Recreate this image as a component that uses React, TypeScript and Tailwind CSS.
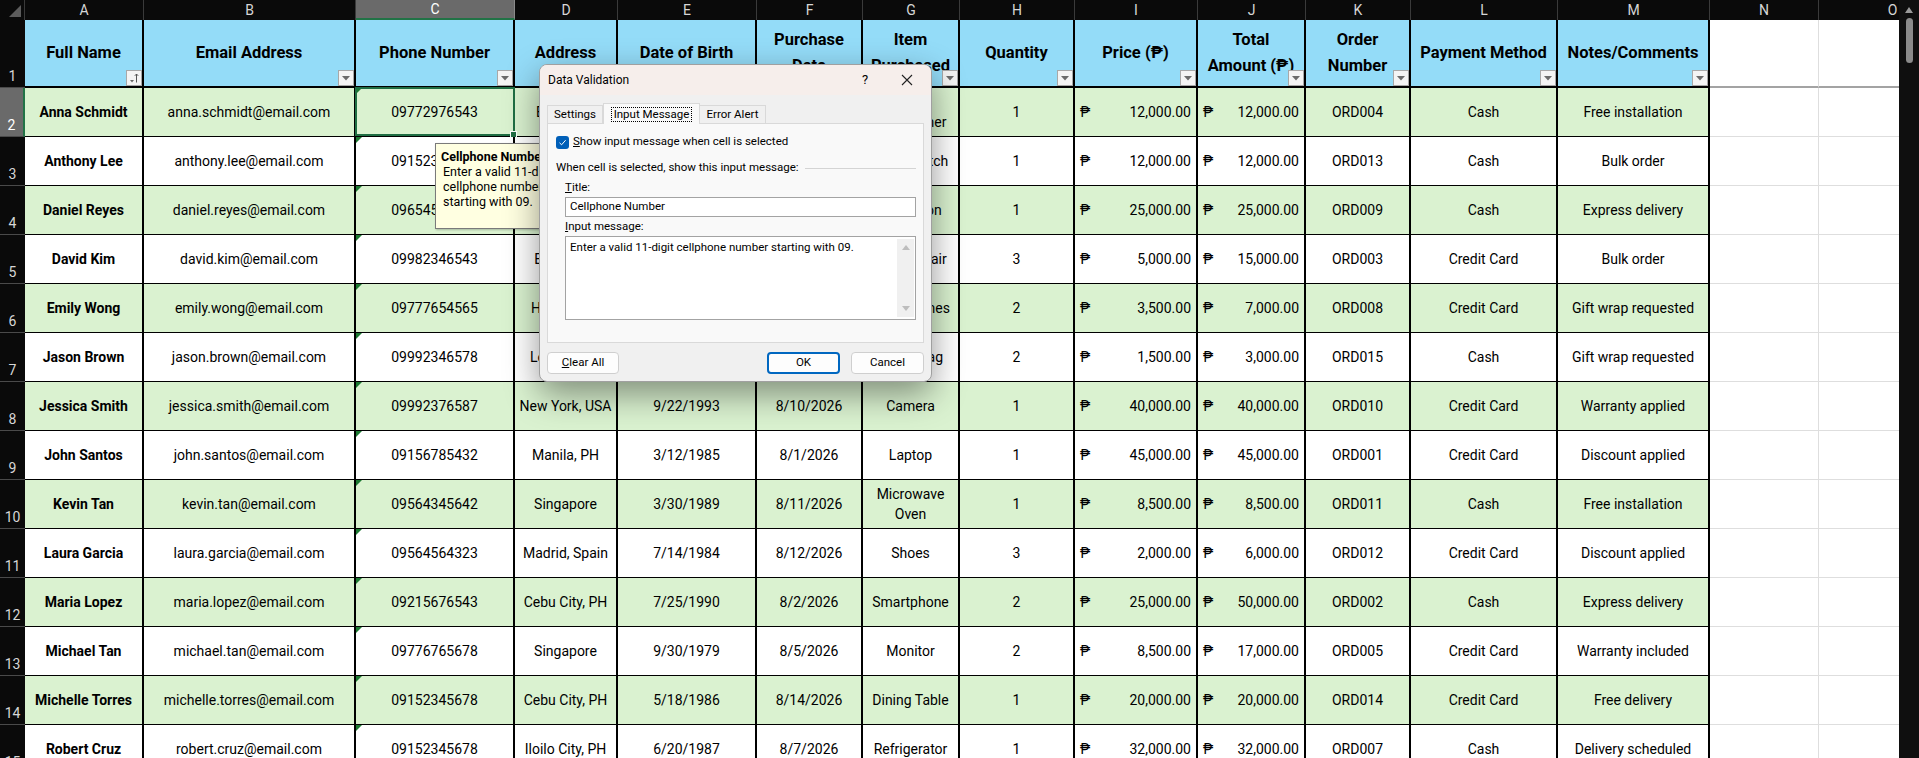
import React from "react";

type Row = {
  name: string;
  email: string;
  phone: string;
  address: string;
  dob: string;
  bought: string;
  item: string;
  qty: string;
  price: string;
  total: string;
  order: string;
  payment: string;
  notes: string;
};

const rows: Row[] = [
  { name: "Anna Schmidt", email: "anna.schmidt@email.com", phone: "09772976543", address: "Berlin, DE", dob: "2/14/1991", bought: "8/4/2026", item: "Air Conditioner", qty: "1", price: "12,000.00", total: "12,000.00", order: "ORD004", payment: "Cash", notes: "Free installation" },
  { name: "Anthony Lee", email: "anthony.lee@email.com", phone: "09152367890", address: "Seoul, KR", dob: "11/3/1988", bought: "8/13/2026", item: "Smartwatch", qty: "1", price: "12,000.00", total: "12,000.00", order: "ORD013", payment: "Cash", notes: "Bulk order" },
  { name: "Daniel Reyes", email: "daniel.reyes@email.com", phone: "09654567890", address: "Davao, PH", dob: "4/8/1992", bought: "8/9/2026", item: "Television", qty: "1", price: "25,000.00", total: "25,000.00", order: "ORD009", payment: "Cash", notes: "Express delivery" },
  { name: "David Kim", email: "david.kim@email.com", phone: "09982346543", address: "Busan, KR", dob: "1/21/1987", bought: "8/3/2026", item: "Office Chair", qty: "3", price: "5,000.00", total: "15,000.00", order: "ORD003", payment: "Credit Card", notes: "Bulk order" },
  { name: "Emily Wong", email: "emily.wong@email.com", phone: "09777654565", address: "Hong Kong", dob: "6/2/1995", bought: "8/8/2026", item: "Headphones", qty: "2", price: "3,500.00", total: "7,000.00", order: "ORD008", payment: "Credit Card", notes: "Gift wrap requested" },
  { name: "Jason Brown", email: "jason.brown@email.com", phone: "09992346578", address: "London, UK", dob: "10/9/1990", bought: "8/15/2026", item: "Travel Bag", qty: "2", price: "1,500.00", total: "3,000.00", order: "ORD015", payment: "Cash", notes: "Gift wrap requested" },
  { name: "Jessica Smith", email: "jessica.smith@email.com", phone: "09992376587", address: "New York, USA", dob: "9/22/1993", bought: "8/10/2026", item: "Camera", qty: "1", price: "40,000.00", total: "40,000.00", order: "ORD010", payment: "Credit Card", notes: "Warranty applied" },
  { name: "John Santos", email: "john.santos@email.com", phone: "09156785432", address: "Manila, PH", dob: "3/12/1985", bought: "8/1/2026", item: "Laptop", qty: "1", price: "45,000.00", total: "45,000.00", order: "ORD001", payment: "Credit Card", notes: "Discount applied" },
  { name: "Kevin Tan", email: "kevin.tan@email.com", phone: "09564345642", address: "Singapore", dob: "3/30/1989", bought: "8/11/2026", item: "Microwave Oven", qty: "1", price: "8,500.00", total: "8,500.00", order: "ORD011", payment: "Cash", notes: "Free installation" },
  { name: "Laura Garcia", email: "laura.garcia@email.com", phone: "09564564323", address: "Madrid, Spain", dob: "7/14/1984", bought: "8/12/2026", item: "Shoes", qty: "3", price: "2,000.00", total: "6,000.00", order: "ORD012", payment: "Credit Card", notes: "Discount applied" },
  { name: "Maria Lopez", email: "maria.lopez@email.com", phone: "09215676543", address: "Cebu City, PH", dob: "7/25/1990", bought: "8/2/2026", item: "Smartphone", qty: "2", price: "25,000.00", total: "50,000.00", order: "ORD002", payment: "Cash", notes: "Express delivery" },
  { name: "Michael Tan", email: "michael.tan@email.com", phone: "09776765678", address: "Singapore", dob: "9/30/1979", bought: "8/5/2026", item: "Monitor", qty: "2", price: "8,500.00", total: "17,000.00", order: "ORD005", payment: "Credit Card", notes: "Warranty included" },
  { name: "Michelle Torres", email: "michelle.torres@email.com", phone: "09152345678", address: "Cebu City, PH", dob: "5/18/1986", bought: "8/14/2026", item: "Dining Table", qty: "1", price: "20,000.00", total: "20,000.00", order: "ORD014", payment: "Credit Card", notes: "Free delivery" },
  { name: "Robert Cruz", email: "robert.cruz@email.com", phone: "09152345678", address: "Iloilo City, PH", dob: "6/20/1987", bought: "8/7/2026", item: "Refrigerator", qty: "1", price: "32,000.00", total: "32,000.00", order: "ORD007", payment: "Cash", notes: "Delivery scheduled" },
];

const letters = ["A", "B", "C", "D", "E", "F", "G", "H", "I", "J", "K", "L", "M", "N", "O"];

const headers = [
  "Full Name",
  "Email Address",
  "Phone Number",
  "Address",
  "Date of Birth",
  "Purchase\nDate",
  "Item\nPurchased",
  "Quantity",
  "Price (₱)",
  "Total\nAmount (₱)",
  "Order\nNumber",
  "Payment Method",
  "Notes/Comments",
];

function FilterButton({ sorted }: { sorted?: boolean }) {
  return (
    <div className="absolute right-0 bottom-0 w-[16px] h-[16px] bg-[#f4f4f4] border border-[#a8a8a8] flex items-center justify-center">
      {sorted ? (
        <svg width="12" height="12" viewBox="0 0 12 12">
          <path d="M2 8h4l-2 2.5z" fill="#666" />
          <path d="M8.5 10.5V2M6.8 3.8L8.5 2l1.7 1.8" stroke="#555" strokeWidth="1" fill="none" />
        </svg>
      ) : (
        <svg width="8" height="5" viewBox="0 0 8 5">
          <path d="M0 0h8L4 4.5z" fill="#6b6b6b" />
        </svg>
      )}
    </div>
  );
}

function RowNum({ n }: { n: number }) {
  if (n === 2) {
    return (
      <div className="bg-[#6a6a6a] text-white border-b border-[#4a4a4a] border-r-2 border-r-[#217346] flex items-end justify-center pb-[2px] text-[14px] leading-[18px]">
        {n}
      </div>
    );
  }
  return (
    <div className="bg-[#0a0a0a] text-[#d6d6d6] border-b border-[#4a4a4a] flex items-end justify-center pb-[2px] text-[14px] leading-[18px]">
      {n}
    </div>
  );
}

function DataRow({ r, n }: { r: Row; n: number }) {
  const bg = n % 2 === 0 ? "bg-[#daf2d0]" : "bg-white";
  const cell = `${bg} border-r-2 border-b border-black flex items-center justify-center text-center px-[4px] leading-[20px]`;
  const money = `${bg} border-r-2 border-b border-black flex items-center justify-between pl-[5px] pr-[5px]`;
  return (
    <>
      <RowNum n={n} />
      <div className={`${cell} font-bold`}>{r.name}</div>
      <div className={cell}>{r.email}</div>
      <div className={`${cell} relative`}>
        <div className="absolute left-0 top-0 w-0 h-0 border-t-[6px] border-r-[6px] border-t-[#1c7a32] border-r-transparent" />
        {r.phone}
        {n === 2 && (
          <div className="absolute -left-[1px] -top-[1px] -right-[2px] bottom-0 border-2 border-[#1f6e43]">
            <div className="absolute -right-[4px] -bottom-[4px] w-[7px] h-[7px] bg-[#1f6e43] border border-white" />
          </div>
        )}
      </div>
      <div className={cell}>{r.address}</div>
      <div className={cell}>{r.dob}</div>
      <div className={cell}>{r.bought}</div>
      <div className={cell}>{r.item}</div>
      <div className={cell}>{r.qty}</div>
      <div className={money}>
        <span>₱</span>
        <span>{r.price}</span>
      </div>
      <div className={money}>
        <span>₱</span>
        <span>{r.total}</span>
      </div>
      <div className={cell}>{r.order}</div>
      <div className={cell}>{r.payment}</div>
      <div className={cell}>{r.notes}</div>
      <div className="bg-white border-r border-b border-[#dedede]" />
      <div className="bg-white border-b border-[#dedede]" />
    </>
  );
}

function Sheet() {
  return (
    <div className="grid w-max grid-cols-[25px_119px_212px_159px_103px_139px_106px_97px_115px_123px_108px_105px_147px_152px_109px_148px] grid-rows-[20px_68px_repeat(14,49px)] text-[14px] text-black">
      {/* column letters */}
      <div className="bg-[#0a0a0a] border-r border-[#3a3a3a] flex items-end justify-end pr-[3px] pb-[3px]">
        <svg width="12" height="12" viewBox="0 0 12 12">
          <path d="M12 0V12H0z" fill="#5c5c5c" />
        </svg>
      </div>
      {letters.map((l) =>
        l === "C" ? (
          <div key={l} className="bg-[#6a6a6a] text-white border-r border-[#8a8a8a] border-b-2 border-b-[#217346] flex items-center justify-center">
            {l}
          </div>
        ) : (
          <div key={l} className="bg-[#0a0a0a] text-[#d6d6d6] border-r border-[#3a3a3a] flex items-center justify-center">
            {l}
          </div>
        )
      )}

      {/* header row */}
      <div className="bg-[#0a0a0a] text-[#d6d6d6] border-b border-[#4a4a4a] flex items-end justify-center pb-[2px] leading-[18px]">
        1
      </div>
      {headers.map((h, i) => (
        <div
          key={h}
          className="relative bg-[#94dcf8] border-r-2 border-b-2 border-black flex items-center justify-center text-center px-[3px] font-bold text-[16.5px] leading-[26px] whitespace-pre-line"
        >
          {h}
          <FilterButton sorted={i === 0} />
        </div>
      ))}
      <div className="bg-white border-r border-[#dedede] border-b-2 border-b-[#a3a3a3]" />
      <div className="bg-white border-b-2 border-b-[#a3a3a3]" />

      {rows.map((r, i) => (
        <DataRow key={r.name} r={r} n={i + 2} />
      ))}
    </div>
  );
}

function InputTooltip() {
  return (
    <div className="absolute left-[435px] top-[143px] w-[150px] h-[86px] bg-[#ffffe1] border border-[#7a7a7a] shadow-[1px_1px_2px_rgba(0,0,0,0.25)] pt-[5px] text-[12.5px] leading-[15px] text-black whitespace-nowrap">
      <div className="pl-[5px] font-bold">Cellphone Number</div>
      <div className="pl-[7px]">Enter a valid 11-digit</div>
      <div className="pl-[7px]">cellphone number</div>
      <div className="pl-[7px]">starting with 09.</div>
    </div>
  );
}

function DialogButton({ children, primary }: { children: React.ReactNode; primary?: boolean }) {
  return (
    <div
      className={
        primary
          ? "w-[73px] h-[22px] rounded-[4px] bg-[#fdfdfd] border-2 border-[#0067c0] flex items-center justify-center"
          : "w-[73px] h-[22px] rounded-[4px] bg-[#fdfdfd] border border-[#cfcfcf] flex items-center justify-center"
      }
    >
      {children}
    </div>
  );
}

function DataValidationDialog() {
  return (
    <div className="absolute left-[539px] top-[64px] w-[393px] h-[318px] rounded-[8px] bg-[#f0f0f0] border border-[#a0a0a0] shadow-[0_12px_34px_rgba(0,0,0,0.42)] overflow-hidden text-[11.5px] text-black flex flex-col">
      <div className="h-[30px] shrink-0 bg-[#f6eeeb] flex items-center pl-[8px] text-[12px]">
        <span className="flex-1">Data Validation</span>
        <span className="w-[20px] text-center text-[13px] mr-[26px]">?</span>
        <svg width="12" height="12" viewBox="0 0 12 12" className="mr-[18px]">
          <path d="M1 1L11 11M11 1L1 11" stroke="#222" strokeWidth="1.1" />
        </svg>
      </div>

      <div className="px-[7px] pt-[8px]">
        <div className="h-[20px] flex items-end">
          <div className="w-[56px] h-[18px] border border-b-0 border-[#d9d9d9] bg-[#f0f0f0] flex items-center justify-center">
            Settings
          </div>
          <div className="relative z-10 w-[97px] h-[21px] -mb-px border border-b-0 border-[#d9d9d9] bg-[#f9f9f9] flex items-center justify-center">
            <span className="border border-dotted border-black px-[2px] leading-[13px]">Input Message</span>
          </div>
          <div className="w-[66px] h-[18px] border border-b-0 border-l-0 border-[#d9d9d9] bg-[#f0f0f0] flex items-center justify-center">
            Error Alert
          </div>
        </div>

        <div className="h-[220px] border border-[#d9d9d9] bg-[#f9f9f9] flex flex-col pl-[8px] pr-[7px] pt-[11px]">
          <div className="h-[14px] flex items-center gap-[4px]">
            <div className="w-[13px] h-[13px] rounded-[3px] bg-[#005fb8] flex items-center justify-center">
              <svg width="9" height="9" viewBox="0 0 9 9">
                <path d="M1.5 4.8L3.6 6.8L7.6 2.2" stroke="white" strokeWidth="1" fill="none" />
              </svg>
            </div>
            <span>
              <span className="underline">S</span>how input message when cell is selected
            </span>
          </div>
          <div className="mt-[12px] h-[14px] flex items-center gap-[6px]">
            <span>When cell is selected, show this input message:</span>
            <div className="flex-1 border-t border-[#d4d4d4]" />
          </div>
          <div className="mt-[6px] h-[14px] flex items-center pl-[9px]">
            <span>
              <span className="underline">T</span>itle:
            </span>
          </div>
          <div className="ml-[9px] mt-[2px] h-[20px] bg-white border border-[#a3a3a3] flex items-center pl-[4px]">
            Cellphone Number
          </div>
          <div className="mt-[3px] h-[14px] flex items-center pl-[9px]">
            <span>
              <span className="underline">I</span>nput message:
            </span>
          </div>
          <div className="ml-[9px] mt-[2px] h-[84px] bg-white border border-[#a3a3a3] flex">
            <div className="flex-1 pl-[4px] pt-[3px] leading-[14px]">
              Enter a valid 11-digit cellphone number starting with 09.
            </div>
            <div className="w-[17px] my-[2px] mr-[1px] bg-[#f0f0f0] flex flex-col items-center justify-between py-[6px]">
              <svg width="8" height="5" viewBox="0 0 8 5">
                <path d="M4 0L8 5H0z" fill="#bdbdbd" />
              </svg>
              <svg width="8" height="5" viewBox="0 0 8 5">
                <path d="M0 0h8L4 5z" fill="#bdbdbd" />
              </svg>
            </div>
          </div>
        </div>
      </div>

      <div className="mt-[9px] px-[7px] flex items-center">
        <div className="w-[72px] h-[22px] rounded-[4px] bg-[#fdfdfd] border border-[#cfcfcf] flex items-center justify-center">
          <span>
            <span className="underline">C</span>lear All
          </span>
        </div>
        <div className="flex-1" />
        <DialogButton primary>OK</DialogButton>
        <div className="w-[11px]" />
        <DialogButton>Cancel</DialogButton>
      </div>
    </div>
  );
}

export default function App() {
  return (
    <div className="relative flex h-[758px] w-[1919px] overflow-hidden bg-white font-['Roboto','Liberation_Sans',sans-serif]">
      <div className="flex-1 overflow-hidden">
        <Sheet />
      </div>
      <div className="w-[20px] shrink-0 bg-[#0f0f0f] flex flex-col items-center pt-[7px]">
        <svg width="8" height="6" viewBox="0 0 8 6">
          <path d="M4 0L8 6H0z" fill="#9a9a9a" />
        </svg>
        <div className="mt-[5px] w-[7px] h-[45px] rounded-full bg-[#8b8b8b]" />
      </div>
      <InputTooltip />
      <DataValidationDialog />
    </div>
  );
}
